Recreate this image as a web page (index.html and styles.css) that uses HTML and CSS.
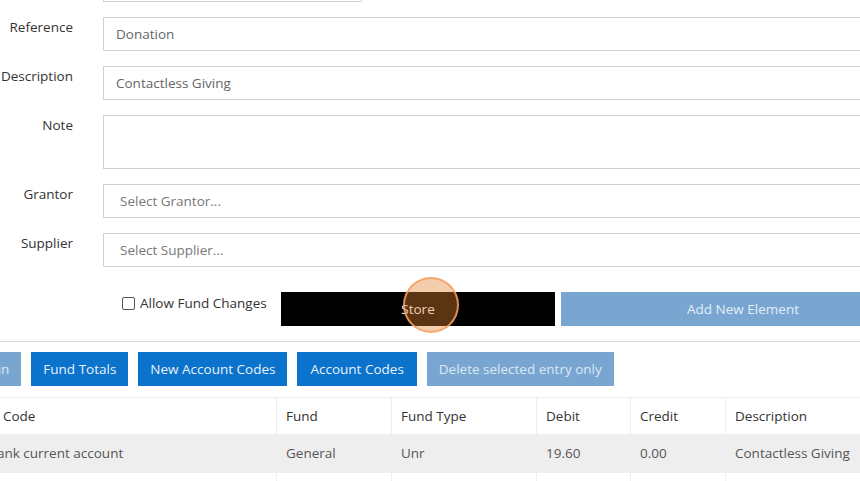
FILE: index.html
```html
<!DOCTYPE html>
<html>
<head>
<meta charset="utf-8">
<link rel="stylesheet" href="styles.css">
</head>
<body>
<div class="page">
  <div class="form">
    <div class="label"></div>
    <div class="field short"><input class="input" type="text" value=""></div>

    <label class="label">Reference</label>
    <div class="field"><input class="input" type="text" value="Donation"></div>

    <label class="label">Description</label>
    <div class="field"><input class="input" type="text" value="Contactless Giving"></div>

    <label class="label">Note</label>
    <div class="field"><textarea class="input textarea"></textarea></div>

    <label class="label">Grantor</label>
    <div class="field"><div class="input select">Select Grantor...</div></div>

    <label class="label">Supplier</label>
    <div class="field"><div class="input select">Select Supplier...</div></div>
  </div>

  <div class="actions">
    <label class="check"><span class="box"></span>Allow Fund Changes</label>
    <button class="btn-store">Store<span class="click"></span></button>
    <button class="btn-add">Add New Element</button>
  </div>

  <div class="divider"></div>

  <div class="toolbar">
    <button class="btn light">Main</button>
    <button class="btn">Fund Totals</button>
    <button class="btn">New Account Codes</button>
    <button class="btn wide">Account Codes</button>
    <button class="btn light">Delete selected entry only</button>
  </div>

  <table class="grid">
    <thead>
      <tr>
        <th class="c1">Nominal Code</th>
        <th class="c2">Fund</th>
        <th class="c3">Fund Type</th>
        <th class="c4">Debit</th>
        <th class="c5">Credit</th>
        <th class="c6">Description</th>
      </tr>
    </thead>
    <tbody>
      <tr class="shade">
        <td>1200 - Bank current account</td>
        <td>General</td>
        <td>Unr</td>
        <td>19.60</td>
        <td>0.00</td>
        <td>Contactless Giving</td>
      </tr>
      <tr>
        <td>&nbsp;</td><td></td><td></td><td></td><td></td><td></td>
      </tr>
    </tbody>
  </table>
</div>
</body>
</html>
```

FILE: styles.css
```css
html, body {
  margin: 0;
  padding: 0;
  background: #fff;
  overflow: hidden;
}
body {
  width: 860px;
  height: 481px;
  font-family: "Open Sans", "Liberation Sans", sans-serif;
  font-size: 13.5px;
  color: #333;
}
.page {
  width: 988px;
  margin-left: -63px;
  margin-top: -32px;
}
.form {
  display: grid;
  grid-template-columns: 136px 1fr;
  column-gap: 30px;
  row-gap: 15px;
}
.label {
  text-align: right;
  line-height: 20px;
  color: #333;
}
.field.short {
  width: 259px;
}
.input {
  box-sizing: border-box;
  display: block;
  width: 100%;
  height: 34px;
  margin: 0;
  border: 1px solid #d2d2d2;
  border-radius: 0;
  background: #fff;
  font-family: "Open Sans", "Liberation Sans", sans-serif;
  font-size: 13.5px;
  color: #666;
  padding: 0 12px;
  outline: none;
}
.textarea {
  height: 54px;
  resize: none;
}
.select {
  padding: 0 16px;
  line-height: 32px;
  color: #777;
}
.actions {
  display: flex;
  align-items: flex-start;
  margin-top: 25px;
  margin-left: 166px;
  height: 34px;
}
.check {
  width: 178px;
  box-sizing: border-box;
  padding-left: 19px;
  padding-top: 1px;
  display: flex;
  align-items: center;
  line-height: 20px;
  color: #333;
}
.box {
  width: 11px;
  height: 11px;
  border: 1px solid #555;
  border-radius: 2px;
  margin-right: 5px;
  background: #fff;
}
.btn-store {
  position: relative;
  width: 274px;
  height: 34px;
  border: 0;
  background: #000;
  color: #fff;
  font-family: "Open Sans", "Liberation Sans", sans-serif;
  font-size: 13.5px;
  padding: 0;
  margin-right: 6px;
}
.click {
  position: absolute;
  left: 122px;
  top: -15px;
  width: 52px;
  height: 52px;
  border-radius: 50%;
  background: rgba(228, 130, 50, 0.4);
  border: 2px solid rgba(244, 160, 95, 0.85);
}
.btn-add {
  flex: 1;
  height: 34px;
  border: 0;
  background: #78a6d0;
  color: #e2edf7;
  font-family: "Open Sans", "Liberation Sans", sans-serif;
  font-size: 13.5px;
}
.divider {
  margin-top: 15px;
  border-top: 1px solid #d8d8d8;
}
.toolbar {
  display: flex;
  gap: 10px;
  margin-top: 10px;
  padding-left: 29px;
}
.btn {
  height: 34px;
  border: 0;
  padding: 0 12px;
  background: #0b73cc;
  color: #e8f1fa;
  font-family: "Open Sans", "Liberation Sans", sans-serif;
  font-size: 13.5px;
}
.btn.wide {
  padding: 0 13px;
}
.btn.light {
  background: #78a6d0;
  color: #dbe8f4;
}
.grid {
  margin-top: 11px;
  width: 988px;
  border-collapse: collapse;
  table-layout: fixed;
}
.grid th, .grid td {
  text-align: left;
  font-weight: normal;
  padding: 0 9px;
  border-left: 1px solid #ededed;
  white-space: nowrap;
  overflow: hidden;
}
.grid th:first-child, .grid td:first-child {
  border-left: 0;
}
.grid thead tr {
  height: 36px;
  border-top: 1px solid #eeeeee;
}
.grid th {
  color: #333;
}
.grid td {
  color: #555;
  height: 39px;
}
.grid tr.shade td {
  background: #efeeee;
}
.c1 { width: 321px; }
.c2 { width: 96px; }
.c3 { width: 126px; }
.c4 { width: 75px; }
.c5 { width: 76px; }
.c6 { width: auto; }
```
